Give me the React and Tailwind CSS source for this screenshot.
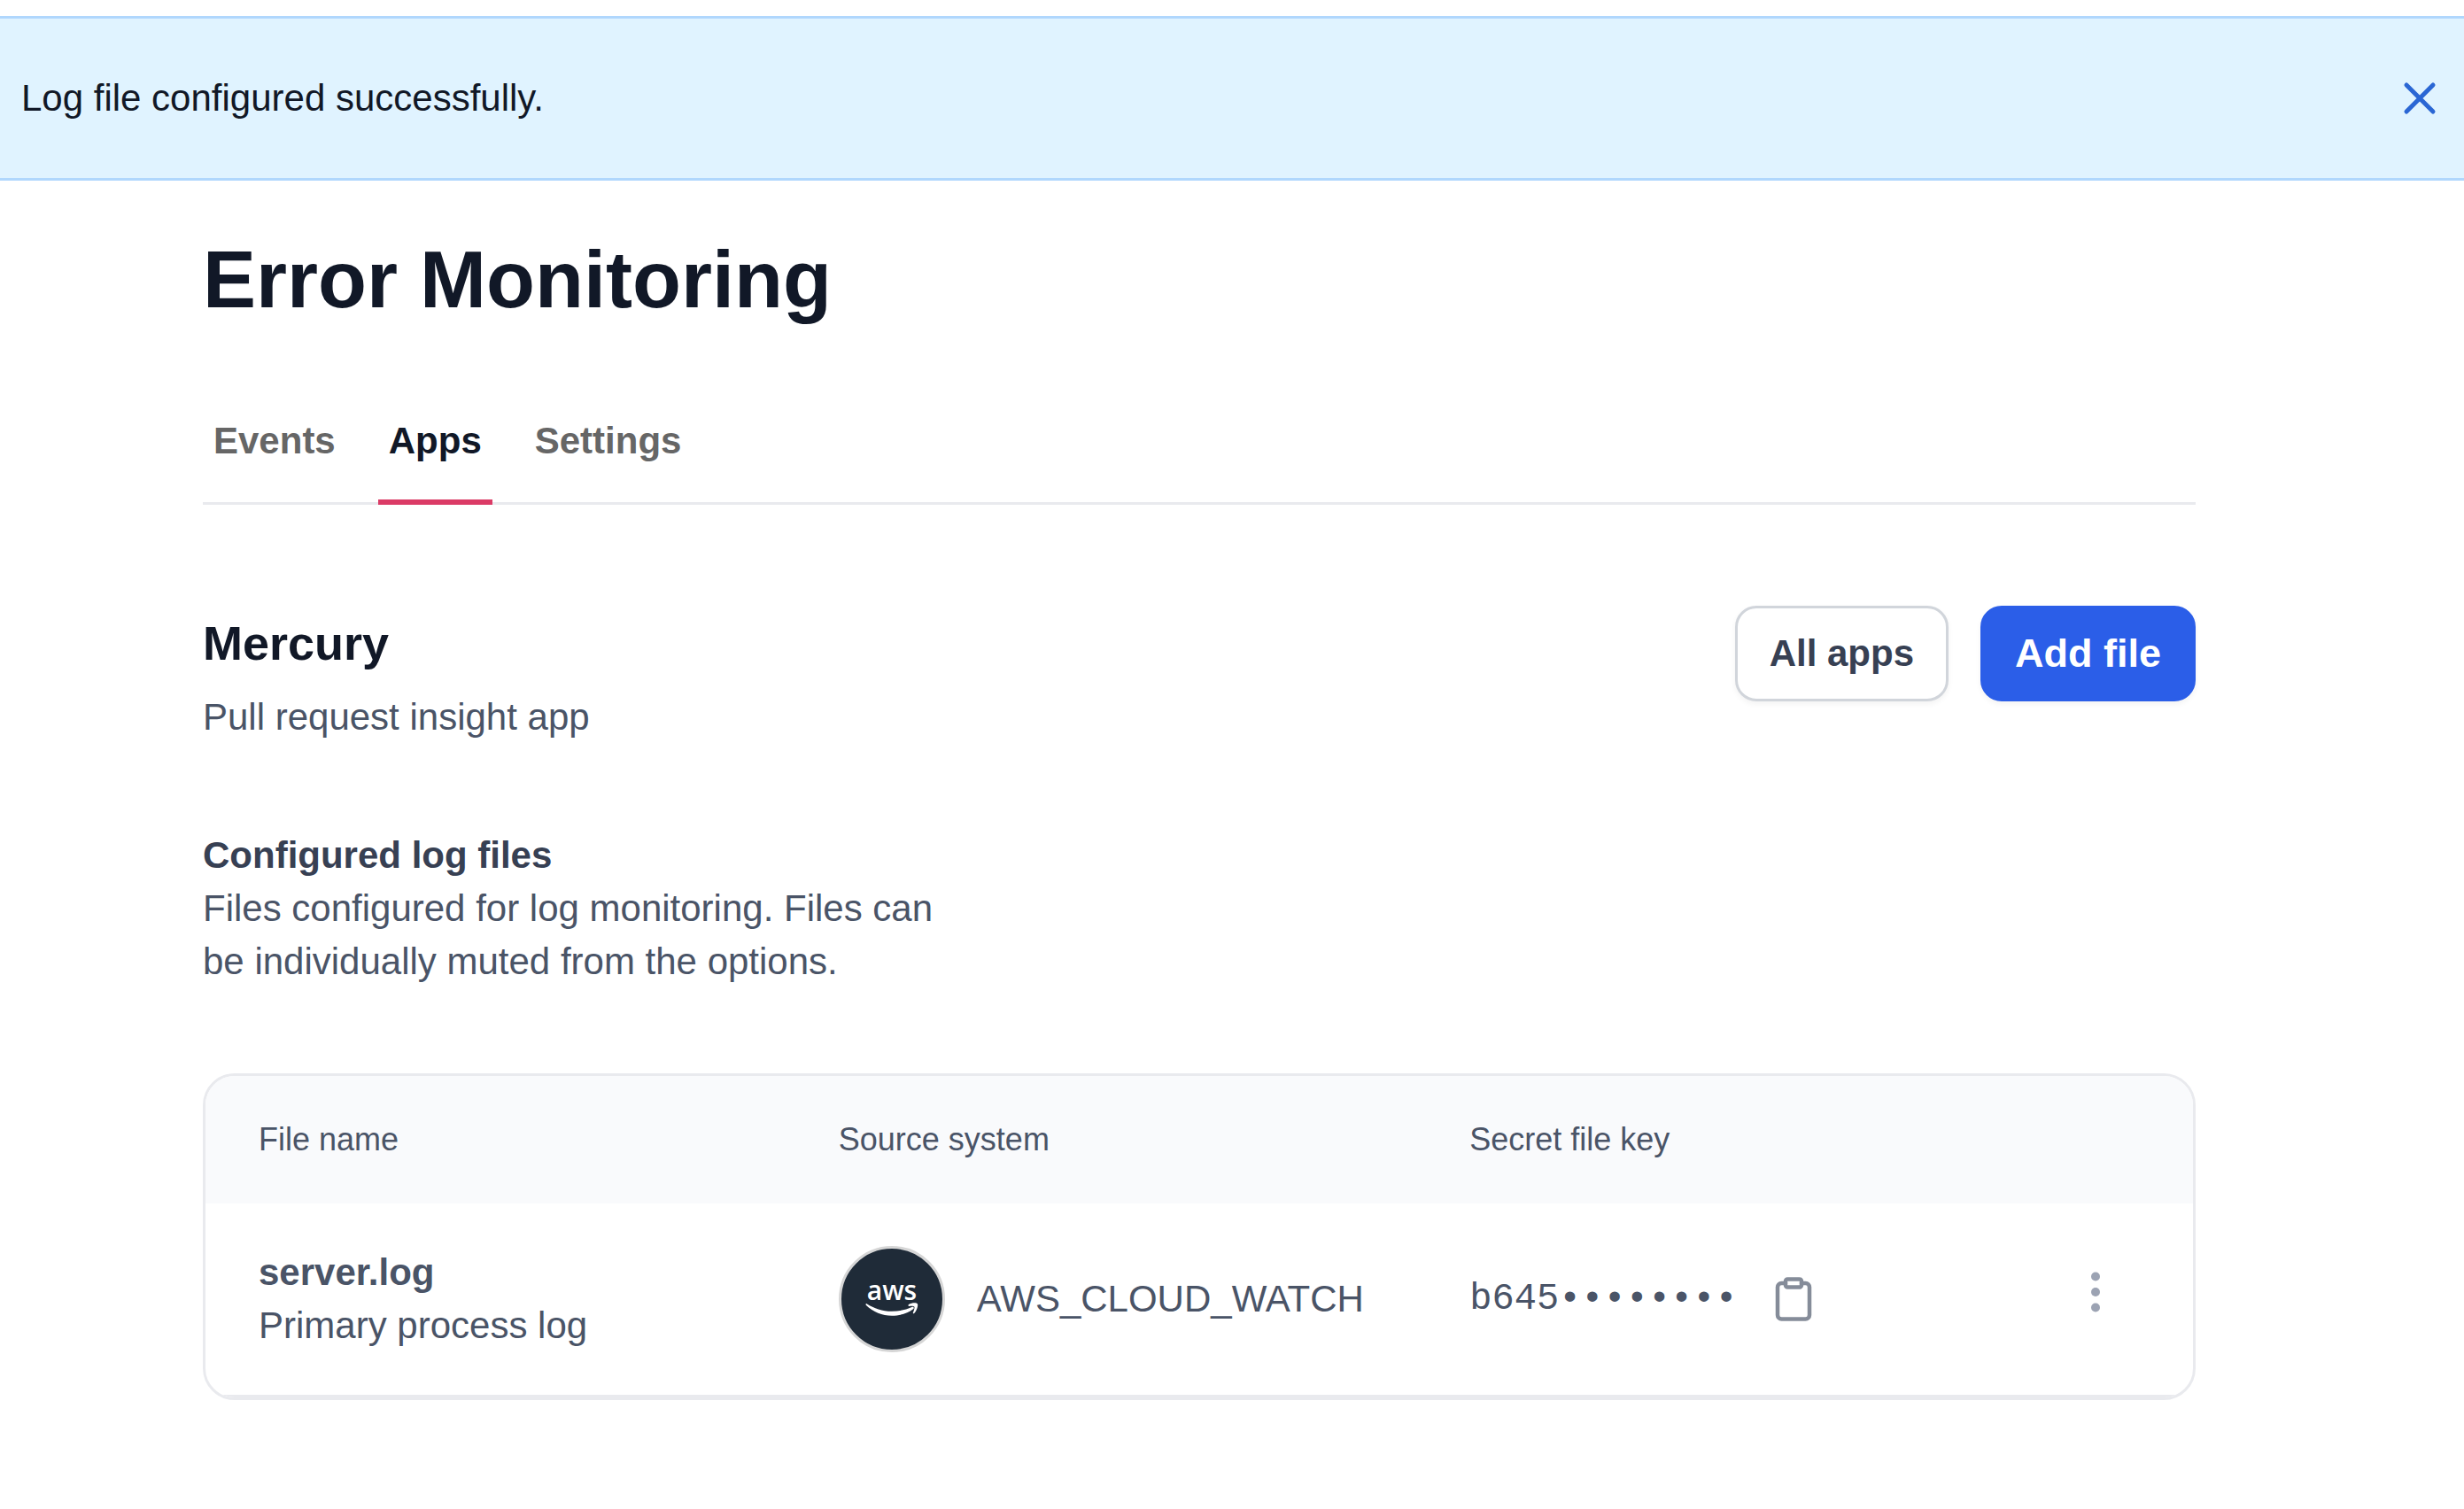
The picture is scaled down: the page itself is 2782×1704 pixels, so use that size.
import { Clipboard } from "lucide-react";

const tabs = [
  { label: "Events", active: false },
  { label: "Apps", active: true },
  { label: "Settings", active: false },
];

const files = [
  {
    name: "server.log",
    description: "Primary process log",
    source: "AWS_CLOUD_WATCH",
    key: "b645••••••••",
  },
];

function CloseIcon() {
  return (
    <svg className="size-[60px]" viewBox="0 0 24 24" fill="none" stroke="currentColor" strokeWidth="2" strokeLinecap="round" strokeLinejoin="round" aria-hidden="true">
      <path d="M6 18L18 6M6 6l12 12" />
    </svg>
  );
}

function DotsIcon() {
  return (
    <svg className="size-[60px]" viewBox="0 0 24 24" fill="currentColor" aria-hidden="true">
      <circle cx="12" cy="5" r="2" />
      <circle cx="12" cy="12" r="2" />
      <circle cx="12" cy="19" r="2" />
    </svg>
  );
}

function AwsLogo() {
  return (
    <svg className="size-full" viewBox="0 0 114 114" role="img" aria-label="aws">
      <text x="57" y="58" textAnchor="middle" fontSize="30" fontWeight="600" fill="#fff" fontFamily="'Open Sans', sans-serif">
        aws
      </text>
      <path d="M28.600 62.200C37 67.500 46 70.800 57 70.800C65 70.800 73 69 79.500 66C81.500 65.300 82.500 67 81 68.200C75 73 66 75.800 57 75.800C46 75.800 36 71.500 28 64C27 62.900 27.700 61.700 28.600 62.200Z" fill="#fff" />
      <path d="M76 63C79.500 60.800 85 60.700 86 62.400C86.700 64.300 85.300 69.800 82.200 73C81.400 73.800 80.400 73.200 80.900 72.200C82 69.800 83 66.500 82.300 65.600C81.500 64.500 78.500 64.800 76.600 65C75.400 65.100 75 63.800 76 63Z" fill="#fff" />
    </svg>
  );
}

export default function App() {
  return (
    <div className="min-h-screen bg-white pt-[18px] pb-[120px] font-['Liberation_Sans',Arial,sans-serif] text-[42px] leading-[60px] text-[#4a5467]">
      <div role="status" className="flex items-center justify-between border-y-3 border-[#b0d7fd] bg-[#e0f3ff] py-[60px] pr-5 pl-6 text-[#111827]">
        <p>Log file configured successfully.</p>
        <button type="button" aria-label="Dismiss" className="text-[#2a66d4]">
          <CloseIcon />
        </button>
      </div>

      <main className="mr-[303px] ml-[229px] pt-[58px]">
        <h1 className="text-[90px] leading-[108px] font-bold text-[#111827]">Error Monitoring</h1>

        <nav aria-label="Sections" className="mt-[98px] flex gap-9 border-b-3 border-[#e9eaee] font-bold">
          {tabs.map((tab) => (
            <a
              key={tab.label}
              href="#"
              aria-current={tab.active ? "page" : undefined}
              className={
                tab.active
                  ? "-mb-[3px] border-b-6 border-[#db3b66] px-3 pb-9 text-[#111827]"
                  : "-mb-[3px] border-b-6 border-transparent px-3 pb-9 text-[#666666]"
              }
            >
              {tab.label}
            </a>
          ))}
        </nav>

        <header className="mt-[114px] flex items-start justify-between">
          <div>
            <h2 className="text-[54px] leading-[84px] font-bold text-[#111827]">Mercury</h2>
            <p className="mt-3">Pull request insight app</p>
          </div>
          <div className="flex gap-9">
            <button type="button" className="h-[108px] rounded-3xl border-3 border-[#d1d5db] bg-white px-9 font-bold text-[#374053] shadow-[0_3px_6px_rgba(0,0,0,0.05)]">
              All apps
            </button>
            <button type="button" className="h-[108px] rounded-3xl border-3 border-[#2b5ee8] bg-[#2b5ee8] px-9 text-[45px] font-bold text-white shadow-[0_3px_6px_rgba(0,0,0,0.05)]">
              Add file
            </button>
          </div>
        </header>

        <section className="mt-24">
          <h3 className="font-bold text-[#374053]">Configured log files</h3>
          <p className="max-w-[860px]">
            Files configured for log monitoring. Files can be individually muted from the options.
          </p>
        </section>

        <div className="mt-24 overflow-hidden rounded-[36px] border-3 border-[#e9eaee]">
          <table className="w-full table-fixed border-separate border-spacing-0 text-left">
            <thead className="bg-[#f9fafc] text-4xl">
              <tr>
                <th scope="col" className="w-[30.25%] py-[42px] pr-9 pl-[60px] leading-[60px] font-normal">File name</th>
                <th scope="col" className="w-[31.75%] px-9 py-[42px] leading-[60px] font-normal">Source system</th>
                <th scope="col" className="px-9 py-[42px] leading-[60px] font-normal">Secret file key</th>
                <th scope="col" className="w-[10%]" aria-label="Options" />
              </tr>
            </thead>
            <tbody>
              {files.map((file) => (
                <tr key={file.name}>
                  <td className="border-b-3 border-[#e9eaee] py-12 pr-9 pl-[60px]">
                    <p className="font-bold">{file.name}</p>
                    <p>{file.description}</p>
                  </td>
                  <td className="border-b-3 border-[#e9eaee] px-9 py-12">
                    <div className="flex items-center gap-9">
                      <span className="size-[120px] shrink-0 overflow-hidden rounded-full border-3 border-[#d6d6d6] bg-[#1f2b38]">
                        <AwsLogo />
                      </span>
                      <span>{file.source}</span>
                    </div>
                  </td>
                  <td className="border-b-3 border-[#e9eaee] px-9 py-12">
                    <div className="flex items-center gap-9">
                      <code className="font-['Liberation_Mono','Courier_New',monospace]">{file.key}</code>
                      <button type="button" aria-label="Copy secret file key" className="text-[#858c99]">
                        <Clipboard className="size-[54px]" />
                      </button>
                    </div>
                  </td>
                  <td className="border-b-3 border-[#e9eaee] py-12 pr-20">
                    <div className="flex justify-end pb-4">
                      <button type="button" aria-label="File options" className="text-[#9ca3b3]">
                        <DotsIcon />
                      </button>
                    </div>
                  </td>
                </tr>
              ))}
            </tbody>
          </table>
        </div>
      </main>
    </div>
  );
}
